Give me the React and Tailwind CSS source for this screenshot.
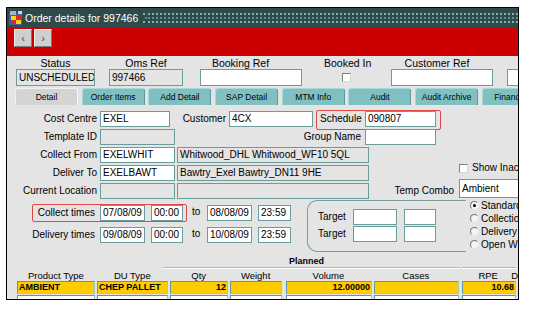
import React from 'react';

function Field({ className = '', value = '', gray = false, right = false }) {
  return (
    <div
      className={`h-[16px] shrink-0 border border-[#6b9c9c] px-[2px] text-[10px] leading-[14px] whitespace-nowrap overflow-hidden ${gray ? 'bg-[#e4e4e4]' : 'bg-white'} ${right ? 'text-right' : ''} ${className}`}
    >
      {value}
    </div>
  );
}

function Label({ className = '', children }) {
  return <div className={`shrink-0 text-right text-[10px] leading-[14px] whitespace-nowrap ${className}`}>{children}</div>;
}

function Check() {
  return <div className="w-[9px] h-[9px] shrink-0 bg-white border border-t-[#808080] border-l-[#808080] border-r-[#d8d8d8] border-b-[#d8d8d8]" />;
}

function Radio({ on, label }) {
  return (
    <div className="h-[13px] flex items-center whitespace-nowrap">
      <div className="w-[9px] h-[9px] shrink-0 rounded-full bg-[#f4f4f4] border border-t-[#777] border-l-[#777] border-r-[#e8e8e8] border-b-[#e8e8e8] flex items-center justify-center">
        {on && <div className="w-[3px] h-[3px] rounded-full bg-black" />}
      </div>
      <span className="ml-[2px] text-[10px] leading-[12px]">{label}</span>
    </div>
  );
}

function TitleBar() {
  return (
    <div className="h-[20px] shrink-0 bg-[#2f4a4a] flex items-center">
      <svg className="ml-[2px] shrink-0" width="14" height="15" viewBox="0 0 14 15">
        <rect x="0" y="2" width="13" height="12" fill="#3a5fb0" />
        <rect x="1" y="0" width="6" height="4" fill="#9fb4d8" />
        <rect x="2" y="5" width="5" height="4" fill="#ffd21a" />
        <rect x="7" y="5" width="5" height="4" fill="#e02828" />
        <rect x="2" y="9" width="5" height="4" fill="#e02828" />
        <rect x="7" y="9" width="5" height="4" fill="#ffd21a" />
        <rect x="9" y="0" width="4" height="3" fill="#c8d4ee" />
      </svg>
      <span className="ml-[2px] text-[10.5px] leading-[12px] text-white whitespace-nowrap">Order details for 997466</span>
      {/* dotted grip pattern */}
      <div className="ml-[5px] flex-1 h-[10px] flex flex-col justify-between overflow-hidden">
        <div className="h-0 border-t-2 border-dotted border-[#7fb2b2]" />
        <div className="ml-[2px] h-0 border-t-2 border-dotted border-[#5f9090]" />
        <div className="h-0 border-t-2 border-dotted border-[#7fb2b2]" />
      </div>
    </div>
  );
}

function Toolbar() {
  const btn =
    'w-[18px] h-[18px] bg-[#cfcfcf] border border-t-[#f2f2f2] border-l-[#f2f2f2] border-r-[#7a7a7a] border-b-[#7a7a7a] flex items-center justify-center text-[11px] leading-[11px] text-[#444]';
  return (
    <div className="h-[28px] shrink-0 bg-[#cc0000] flex items-start pt-[1px] pl-[7px] gap-[2px]">
      <div className={btn}>‹</div>
      <div className={btn}>›</div>
    </div>
  );
}

function Header() {
  return (
    <div className="shrink-0">
      <div className="h-[13px] flex items-center text-[10.5px] leading-[12px] whitespace-nowrap">
        <div className="ml-[9px] w-[79px] text-center">Status</div>
        <div className="ml-[14px] w-[74px] text-center">Oms Ref</div>
        <div className="ml-[17px] w-[81px] text-center">Booking Ref</div>
        <div className="ml-[43px] w-[46px] text-center">Booked In</div>
        <div className="ml-[21px] w-[92px] text-center">Customer Ref</div>
      </div>
      <div className="h-[17px] flex items-center">
        <Field className="ml-[9px] w-[79px] h-[17px] leading-[15px]" value="UNSCHEDULED" gray />
        <Field className="ml-[14px] w-[74px] h-[17px] leading-[15px]" value="997466" gray />
        <Field className="ml-[17px] w-[102px] h-[17px]" />
        <div className="ml-[40px]"><Check /></div>
        <Field className="ml-[40px] w-[102px] h-[17px]" />
        <Field className="ml-[14px] w-[60px] h-[17px]" />
      </div>
    </div>
  );
}

function Tabs() {
  const tabs = ['Detail', 'Order Items', 'Add Detail', 'SAP Detail', 'MTM Info', 'Audit', 'Audit Archive', 'Financials'];
  return (
    <div className="mt-[2px] h-[17px] shrink-0 flex pl-[8px] gap-[3.7px]">
      {tabs.map((t, i) => (
        <div
          key={t}
          className={`w-[63px] shrink-0 h-[17px] rounded-t-[3px] border-t border-l flex items-center justify-center text-[8.5px] leading-[10px] whitespace-nowrap ${
            i === 0
              ? 'bg-[#d4d4d4] border-[#f0f0f0] border-r border-r-[#f8f8f8]'
              : 'bg-[#80c0c0] border-[#a8d8d8] border-r border-r-[#5f9a9a]'
          }`}
        >
          {t}
        </div>
      ))}
    </div>
  );
}

function DetailPanel() {
  return (
    <div className="flex flex-col pt-[5px]">
      <div className="flex h-[18px] items-center">
        <Label className="w-[90px]">Cost Centre</Label>
        <Field className="ml-[3px] w-[70px]" value="EXEL" />
        <Label className="w-[56px]">Customer</Label>
        <Field className="ml-[3px] w-[84px]" value="4CX" />
        <div className="ml-[3px] self-start h-[20px] w-[125px] shrink-0 border border-[#e04848] rounded-[2px] flex items-start">
          <span className="ml-[3px] w-[45px] text-[10px] leading-[16px]">Schedule</span>
          <Field className="w-[71px]" value="090807" />
        </div>
      </div>

      <div className="flex h-[18px] items-center">
        <Label className="w-[90px]">Template ID</Label>
        <Field className="ml-[3px] w-[75px]" gray />
        <Label className="w-[186px]">Group Name</Label>
        <Field className="ml-[4px] w-[71px]" />
      </div>

      <div className="flex h-[18px] items-center">
        <Label className="w-[90px]">Collect From</Label>
        <Field className="ml-[3px] w-[75px]" value="EXELWHIT" />
        <Field className="ml-[2px] w-[192px]" value="Whitwood_DHL Whitwood_WF10 5QL" gray />
      </div>

      <div className="flex h-[18px] items-center">
        <Label className="w-[90px]">Deliver To</Label>
        <Field className="ml-[3px] w-[75px]" value="EXELBAWT" />
        <Field className="ml-[2px] w-[192px]" value="Bawtry_Exel Bawtry_DN11 9HE" gray />
        <div className="ml-[90px] self-start -mt-[2px] h-[12px] flex items-center gap-[4px] whitespace-nowrap">
          <Check />
          <span className="text-[10px] leading-[12px]">Show Inactive</span>
        </div>
      </div>

      <div className="flex h-[18px] items-center">
        <Label className="w-[90px]">Current Location</Label>
        <Field className="ml-[3px] w-[75px]" gray />
        <Field className="ml-[2px] w-[192px]" gray />
        <Label className="w-[85px]">Temp Combo</Label>
        <Field className="ml-[5px] w-[80px] h-[19px] leading-[17px] self-start -mt-[3px]" value="Ambient" />
      </div>

      <div className="flex h-[52px]">
        <div className="w-[284px] shrink-0 flex flex-col pt-[4px]">
          <div className="flex h-[18px] items-center">
            <div className="ml-[25px] w-[155px] h-[18px] shrink-0 border border-[#e04848] rounded-[2px] flex items-center">
              <Label className="w-[62px]">Collect times</Label>
              <Field className="ml-[5px] w-[45px]" value="07/08/09" />
              <Field className="ml-[6px] w-[32px]" value="00:00" />
            </div>
            <span className="ml-[5px] w-[15px] shrink-0 text-[10px] leading-[12px] -mt-[3px]">to</span>
            <Field className="w-[45px]" value="08/08/09" />
            <Field className="ml-[6px] w-[33px]" value="23:59" />
          </div>
          <div className="mt-[4px] flex h-[18px] items-center">
            <Label className="w-[88px]">Delivery times</Label>
            <Field className="ml-[5px] w-[45px]" value="09/08/09" />
            <Field className="ml-[6px] w-[32px]" value="00:00" />
            <span className="ml-[9px] w-[15px] shrink-0 text-[10px] leading-[12px] -mt-[3px]">to</span>
            <Field className="w-[45px]" value="10/08/09" />
            <Field className="ml-[6px] w-[33px]" value="23:59" />
          </div>
        </div>

        <div className="ml-[16px] w-[159px] h-[52px] shrink-0 border-l border-t border-b border-[#7a9e9e] rounded-l-[10px] flex flex-col pt-[9px] gap-[3px] pl-[10px]">
          {[0, 1].map((r) => (
            <div key={r} className="h-[14px] flex items-center">
              <span className="w-[35px] shrink-0 text-[10px] leading-[12px]">Target</span>
              <Field className="w-[44px] h-[14px]" />
              <Field className="ml-[7px] w-[32px] h-[14px]" />
            </div>
          ))}
        </div>

        <div className="ml-[4px] -mt-[1px] flex flex-col">
          <Radio on label="Standard" />
          <Radio label="Collection" />
          <Radio label="Delivery" />
          <Radio label="Open Window" />
        </div>
      </div>

      <div className="h-[15px] flex items-end">
        <span className="ml-[282px] text-[9px] leading-[11px] font-bold">Planned</span>
      </div>
      <div className="h-[2px] flex">
        <div className="ml-[156px] w-[297px] h-[2px] border-t border-[#b4b4b4] border-b border-b-white" />
        <div className="ml-[2px] w-[54px] h-[2px] border-t border-[#b4b4b4] border-b border-b-white" />
      </div>
      <div className="h-[12px] flex items-center text-[9.5px] leading-[11px] whitespace-nowrap">
        <div className="ml-[10px] w-[78px] text-center">Product Type</div>
        <div className="ml-[2px] w-[71px] text-center">DU Type</div>
        <div className="ml-[2px] w-[58px] text-center">Qty</div>
        <div className="ml-[2px] w-[52px] text-center">Weight</div>
        <div className="ml-[4px] w-[86px] text-center">Volume</div>
        <div className="ml-[2px] w-[85px] text-center">Cases</div>
        <div className="ml-[3px] w-[54px] text-center">RPE</div>
        <div className="-ml-[4px]">D</div>
      </div>
      <Row yellow cells={['AMBIENT', 'CHEP PALLET', '12', '', '12.00000', '', '10.68']} />
      <div className="mt-[1px]">
        <Row cells={['', '', '', '', '', '', '']} />
      </div>
    </div>
  );
}

function Row({ cells, yellow = false }) {
  const cls = [
    'ml-[10px] w-[78px]',
    'ml-[2px] w-[71px]',
    'ml-[2px] w-[58px] text-right',
    'ml-[2px] w-[52px] text-right',
    'ml-[4px] w-[86px] text-right',
    'ml-[2px] w-[85px] text-right',
    'ml-[3px] w-[54px] text-right',
  ];
  return (
    <div className="h-[13px] flex">
      {cells.map((c, i) => (
        <div
          key={i}
          className={`${cls[i]} shrink-0 h-[13px] border border-t-[#5f9a9a] border-l-[#5f9a9a] border-r-[#9cc] border-b-[#9cc] px-[1px] text-[9px] leading-[11px] font-bold whitespace-nowrap overflow-hidden ${
            yellow ? 'bg-[#ffcc00]' : 'bg-white'
          }`}
        >
          {c}
        </div>
      ))}
    </div>
  );
}

export default function App() {
  return (
    <div className="w-[534px] h-[311px] bg-white pt-[7px] pl-[6px] font-['Liberation_Sans',Arial,sans-serif] text-black">
      <div className="w-[513px] h-[293px] border border-black overflow-hidden bg-[#e4e4e4] flex flex-col">
        <TitleBar />
        <Toolbar />
        <Header />
        <Tabs />
        <DetailPanel />
      </div>
    </div>
  );
}
